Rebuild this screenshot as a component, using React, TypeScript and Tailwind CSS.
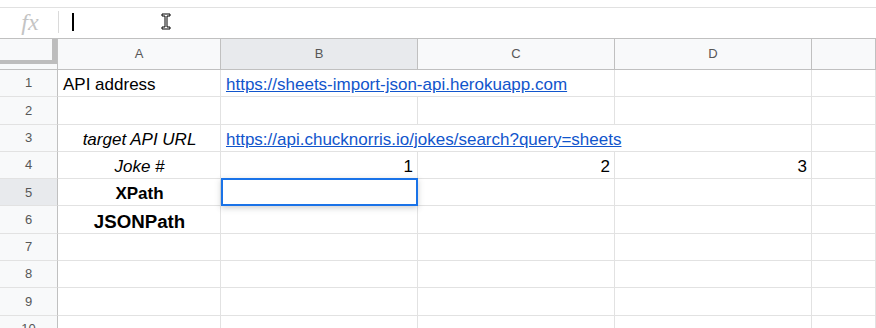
import React from "react";

const ROW_COUNT = 10;
const COLS = ["A", "B", "C", "D", "E"];

type Cell = {
  text?: string;
  link?: boolean;
  align?: "left" | "center" | "right";
  style?: "italic" | "bold" | "boldLarge";
  noRight?: boolean;
};

const data: Record<number, Record<string, Cell>> = {
  1: {
    A: { text: "API address" },
    B: { text: "https://sheets-import-json-api.herokuapp.com", link: true, noRight: true },
  },
  3: {
    A: { text: "target API URL", align: "center", style: "italic" },
    B: { text: "https://api.chucknorris.io/jokes/search?query=sheets", link: true, noRight: true },
    C: { noRight: true },
  },
  4: {
    A: { text: "Joke #", align: "center", style: "italic" },
    B: { text: "1", align: "right" },
    C: { text: "2", align: "right" },
    D: { text: "3", align: "right" },
  },
  5: {
    A: { text: "XPath", align: "center", style: "bold" },
  },
  6: {
    A: { text: "JSONPath", align: "center", style: "boldLarge" },
  },
};

function MouseCursor() {
  return (
    <svg width="10" height="17" viewBox="0 0 10 17" className="ml-[87px] mt-[-4px]">
      <path
        d="M1 1h8v2H6v11h3v2H1v-2h3V3H1z"
        fill="#fff"
        stroke="#000"
        strokeWidth="1"
      />
    </svg>
  );
}

function FormulaBar() {
  return (
    <div className="h-[31px] flex items-center border-t border-[#e1e1e1]">
      <div className="w-[58px] flex justify-center pl-[2px]">
        <span className="font-['Liberation_Serif',serif] italic text-[24px] leading-none text-[#c4c4c4] mt-[-3px]">
          fx
        </span>
      </div>
      <div className="w-px h-[22px] bg-[#dadada] mt-[-2px]" />
      <div className="ml-[13px] w-[2px] h-[18px] bg-black mt-[-3px]" />
      <MouseCursor />
    </div>
  );
}

function DataCell({ row, col }: { row: number; col: string }) {
  const cell = data[row]?.[col] ?? {};
  const selected = row === 5 && col === "B";
  const justify =
    cell.align === "center" ? "justify-center" : cell.align === "right" ? "justify-end" : "justify-start";
  const textClass = cell.link
    ? "text-[#1155cc] underline"
    : cell.style === "italic"
      ? "italic text-black"
      : cell.style === "bold"
        ? "font-bold text-black"
        : cell.style === "boldLarge"
          ? "font-bold text-black text-[18.7px]"
          : "text-black";
  return (
    <div
      className={`relative flex items-end pl-[5px] pr-[4px] pb-[1px] border-b border-[#e2e2e2] ${justify} ${
        cell.noRight ? "" : "border-r"
      }`}
    >
      {cell.text && (
        <span className={`whitespace-nowrap leading-[20px] text-[17px] ${textClass}`}>{cell.text}</span>
      )}
      {selected && (
        <div className="absolute left-0 top-[-1px] right-[-1px] bottom-[-1px] border-2 border-[#1a73e8] shadow-[0_2px_6px_rgba(60,64,67,0.25)] z-10" />
      )}
    </div>
  );
}

export default function App() {
  const rows = Array.from({ length: ROW_COUNT }, (_, i) => i + 1);
  return (
    <div className="w-[876px] h-[328px] overflow-hidden bg-white font-['Liberation_Sans',Arial,sans-serif]">
      <div className="h-[7px]" />
      <FormulaBar />
      <div className="grid grid-cols-[58px_163px_197px_197px_197px_64px] grid-rows-[31px_repeat(10,27.3px)] border-t border-[#c0c0c0]">
        <div className="bg-[#f8f9fa] border-r border-b border-[#c0c0c0]">
          <div className="h-[25px] border-r-[5px] border-b-[4px] border-[#bdbdbd]" />
        </div>
        {COLS.map((c) => (
          <div
            key={c}
            className={`flex items-center justify-center border-r border-b border-[#c0c0c0] text-[13px] text-[#575757] ${
              c === "B" ? "bg-[#e8eaed]" : "bg-[#f8f9fa]"
            }`}
          >
            {c === "E" ? "" : c}
          </div>
        ))}
        {rows.map((r) => (
          <React.Fragment key={r}>
            <div
              className={`flex items-center justify-center border-r border-b border-r-[#c0c0c0] border-b-[#e2e2e2] text-[13px] text-[#575757] ${
                r === 5 ? "bg-[#e8eaed]" : "bg-[#f8f9fa]"
              }`}
            >
              {r}
            </div>
            {COLS.map((c) => (
              <DataCell key={c} row={r} col={c} />
            ))}
          </React.Fragment>
        ))}
      </div>
    </div>
  );
}
